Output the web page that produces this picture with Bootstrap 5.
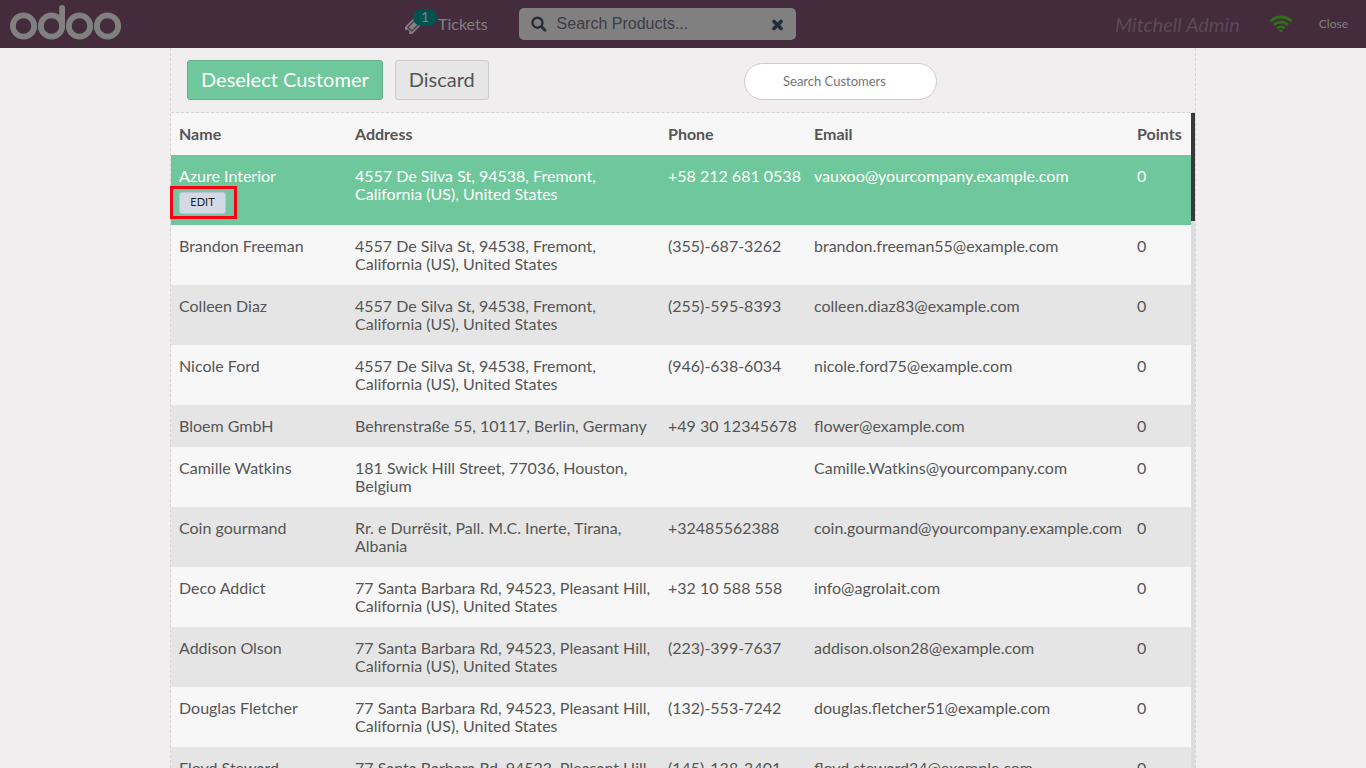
<!DOCTYPE html>
<html lang="en">
<head>
<meta charset="utf-8">
<meta name="viewport" content="width=device-width, initial-scale=1">
<title>Point of Sale - Customers</title>
<link href="https://cdn.jsdelivr.net/npm/bootstrap@5.3.0/dist/css/bootstrap.min.css" rel="stylesheet">
<style>
  body { font-family: Lato, "Liberation Sans", sans-serif; font-size: 16px; line-height: 18px; color: #555; background: #f0eeee; }
  .pos-topbar { height: 48px; background: #442c3d; color: #808080; }
  .pos-left { flex: 0 0 405px; }
  .pos-brand { margin-left: 10px; }
  .pos-tickets { color: #808080; }
  .pos-ticket-icon { margin-right: 17px; margin-top: 4px; }
  .pos-count { left: 8px; top: -9px; width: 24px; height: 17px; border-radius: 9px; background: #005450; font-size: 14px; line-height: 16px; }
  .pos-search { width: 277px; height: 32px; background: #808080; border-radius: 5px; padding: 0 12px; color: #242c35; margin-left: 31px; }
  .pos-search input { font: 16px/18px "Liberation Sans", sans-serif; color: #3c3c46; min-width: 0; margin-left: 10px; }
  .pos-search input::placeholder { color: #3c3c46; opacity: 1; }
  .pos-user { font-size: 20px; line-height: 24px; font-style: italic; color: #5a4a57; }
  .pos-wifi { margin: 0 26px 0 29px; }
  .pos-close { font-size: 12px; color: #808080; margin-right: 18px; }
  .pos-screen { max-width: 1026px; border: 1px dashed #d6d3d3; border-width: 0 1px; min-height: 0; }
  .pos-actions { height: 65px; border-bottom: 1px dashed #d6d3d3; padding-left: 16px; gap: 12px; }
  .pos-btn { height: 40px; padding: 0 13px 2px; border: 1px solid #cacaca; border-radius: 3px; background: #e6e6e6; color: #555; font-size: 20px; line-height: 24px; }
  .pos-btn-main { background: #6ec89b; border-color: #64af8a; color: #fff; }
  .pos-find { width: 193px; height: 37px; margin: 2px 258px 0 auto; border: 1px solid #cecbcb; border-radius: 20px; background: #fff; font-size: 13px; padding: 0 38px; }
  .pos-find::placeholder { color: #757575; opacity: 1; }
  .pos-list, .pos-rows { min-height: 0; min-width: 0; }
  .pos-list { overflow-x: visible; overflow-y: clip; }
  .pos-table { table-layout: fixed; width: 100%; }
  .pos-table th, .pos-table td { padding: 12px 8px; vertical-align: top; white-space: nowrap; }
  .pos-table td:nth-child(2) { white-space: normal; }
  .pos-table thead, .pos-table tbody tr { background: #f7f7f7; }
  .pos-table tbody tr:nth-child(odd) { background: #e5e5e5; }
  .pos-table tbody tr.pos-picked { background: #6ec89b; color: #fff; }
  .w-address { width: 313px; } .w-phone { width: 146px; } .w-email { width: 323px; } .w-points { width: 62px; }
  .pos-edit-mark { width: 67px; height: 33px; border: 3px solid #fb0012; margin: 1px 0 -6px -9px; padding-left: 6px; background: #77c5a5; }
  .pos-edit { width: 47px; height: 22px; border: 1px solid #bcc4d0; border-radius: 3px; background: #d3dae5; color: #222; font-size: 11px; line-height: 14px; padding: 0 0 2px; }
  .pos-track { width: 4px; background: #dcdcdc; }
  .pos-thumb { height: 108px; background: #393939; }
</style>
</head>
<body class="vh-100 d-flex flex-column overflow-hidden">
<header class="pos-topbar d-flex align-items-center flex-shrink-0">
  <div class="pos-left">
    <a href="#" class="pos-brand d-inline-block" aria-label="odoo home">
      <svg class="d-block" width="112" height="36" viewBox="0 0 112 36" fill="none" stroke="#808080" stroke-width="5.8">
        <circle cx="13.5" cy="21" r="10.7"/><circle cx="41.5" cy="21" r="10.7"/><circle cx="69.5" cy="21" r="10.7"/><circle cx="97.5" cy="21" r="10.7"/>
        <path d="M52.1 21V3" stroke-linecap="round"/>
      </svg>
    </a>
  </div>
  <a href="#" class="pos-tickets d-flex align-items-center text-decoration-none">
    <span class="position-relative pos-ticket-icon">
      <svg class="d-block" width="16" height="16" viewBox="0 0 16 16"><g transform="rotate(-45 8 8)"><path fill="#858187" d="M0 3h16v3a2 2 0 0 0 0 4v3H0v-3a2 2 0 0 0 0-4z"/><path fill="none" stroke="#442c3d" stroke-width="1.1" d="M3.6 5.2h8.8v5.6H3.6z"/></g></svg>
      <span class="pos-count position-absolute text-center">1</span>
    </span>
    <span>Tickets</span>
  </a>
  <div class="pos-search d-flex align-items-center">
    <svg width="16" height="16" viewBox="0 0 16 16" fill="none" stroke="currentColor"><circle cx="6.5" cy="6.7" r="5" stroke-width="2.4"/><path d="M10.3 10.5L14 14.2" stroke-width="2.8" stroke-linecap="round"/></svg>
    <input type="text" class="flex-grow-1 border-0 bg-transparent px-0" placeholder="Search Products..." aria-label="Search products">
    <button type="button" class="border-0 bg-transparent p-0" aria-label="Clear search"><svg class="d-block" width="13" height="13" viewBox="0 0 13 13" stroke="#242c35" stroke-width="3.6" stroke-linecap="round"><path d="M3 3.5l7 7M10 3.5l-7 7"/></svg></button>
  </div>
  <div class="flex-grow-1 d-flex align-items-center justify-content-end">
    <span class="pos-user">Mitchell Admin</span>
    <svg class="pos-wifi" width="24" height="18" viewBox="0 0 24 18" fill="none" stroke="#2f6f1a" stroke-width="2.8"><path d="M1.5 6.3a15 15 0 0 1 21 0M5 9.9a10 10 0 0 1 14 0M8.5 13.3a5 5 0 0 1 7 0"/><path d="M9.8 15.2q2.200-1.400 4.400 0L12 17.6z" fill="#2f6f1a" stroke="none"/></svg>
    <a href="#" class="pos-close text-decoration-none">Close</a>
  </div>
</header>
<main class="pos-screen container-fluid p-0 d-flex flex-column flex-grow-1">
  <div class="pos-actions d-flex align-items-center flex-shrink-0">
    <button type="button" class="pos-btn pos-btn-main">Deselect Customer</button>
    <button type="button" class="pos-btn">Discard</button>
    <input type="text" class="pos-find" placeholder="Search Customers" aria-label="Search customers">
  </div>
  <div class="pos-list d-flex flex-grow-1">
    <div class="pos-rows flex-grow-1">
    <table class="pos-table">
      <colgroup><col><col class="w-address"><col class="w-phone"><col class="w-email"><col class="w-points"></colgroup>
      <thead><tr><th>Name</th><th>Address</th><th>Phone</th><th>Email</th><th>Points</th></tr></thead>
      <tbody>
        <tr class="pos-picked"><td>Azure Interior<div class="pos-edit-mark d-flex align-items-center"><button type="button" class="pos-edit">EDIT</button></div></td><td>4557 De Silva St, 94538, Fremont, California (US), United States</td><td>+58 212 681 0538</td><td>vauxoo@yourcompany.example.com</td><td>0</td></tr>
        <tr><td>Brandon Freeman</td><td>4557 De Silva St, 94538, Fremont, California (US), United States</td><td>(355)-687-3262</td><td>brandon.freeman55@example.com</td><td>0</td></tr>
        <tr><td>Colleen Diaz</td><td>4557 De Silva St, 94538, Fremont, California (US), United States</td><td>(255)-595-8393</td><td>colleen.diaz83@example.com</td><td>0</td></tr>
        <tr><td>Nicole Ford</td><td>4557 De Silva St, 94538, Fremont, California (US), United States</td><td>(946)-638-6034</td><td>nicole.ford75@example.com</td><td>0</td></tr>
        <tr><td>Bloem GmbH</td><td>Behrenstraße 55, 10117, Berlin, Germany</td><td>+49 30 12345678</td><td>flower@example.com</td><td>0</td></tr>
        <tr><td>Camille Watkins</td><td>181 Swick Hill Street, 77036, Houston, Belgium</td><td></td><td>Camille.Watkins@yourcompany.com</td><td>0</td></tr>
        <tr><td>Coin gourmand</td><td>Rr. e Durrësit, Pall. M.C. Inerte, Tirana, Albania</td><td>+32485562388</td><td>coin.gourmand@yourcompany.example.com</td><td>0</td></tr>
        <tr><td>Deco Addict</td><td>77 Santa Barbara Rd, 94523, Pleasant Hill, California (US), United States</td><td>+32 10 588 558</td><td>info@agrolait.com</td><td>0</td></tr>
        <tr><td>Addison Olson</td><td>77 Santa Barbara Rd, 94523, Pleasant Hill, California (US), United States</td><td>(223)-399-7637</td><td>addison.olson28@example.com</td><td>0</td></tr>
        <tr><td>Douglas Fletcher</td><td>77 Santa Barbara Rd, 94523, Pleasant Hill, California (US), United States</td><td>(132)-553-7242</td><td>douglas.fletcher51@example.com</td><td>0</td></tr>
        <tr><td>Floyd Steward</td><td>77 Santa Barbara Rd, 94523, Pleasant Hill, California (US), United States</td><td>(145)-138-3401</td><td>floyd.steward34@example.com</td><td>0</td></tr>
      </tbody>
    </table>
    </div>
    <div class="pos-track flex-shrink-0"><div class="pos-thumb"></div></div>
  </div>
</main>
<script src="https://cdn.jsdelivr.net/npm/bootstrap@5.3.0/dist/js/bootstrap.bundle.min.js"></script>
</body>
</html>
